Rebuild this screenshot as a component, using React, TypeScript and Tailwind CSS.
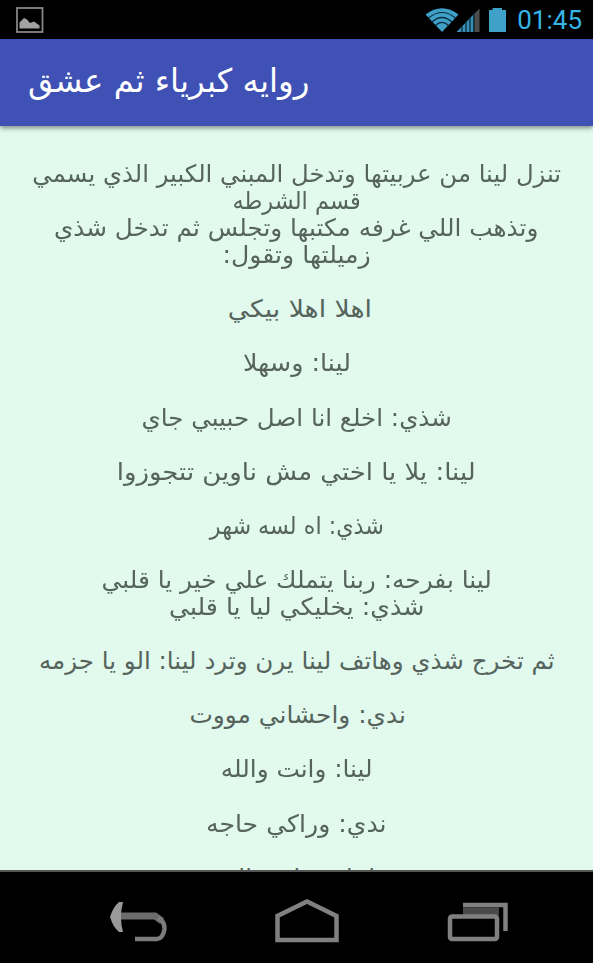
import { FC } from "react";

interface StoryLine {
  text: string;
  className?: string;
}

// 空文字は段落の区切り
const STORY: StoryLine[] = [
  { text: "تنزل لينا من عربيتها وتدخل المبني الكبير الذي يسمي", className: "scale-x-[1.014]" },
  { text: "قسم الشرطه", className: "scale-x-[0.935]" },
  { text: "وتذهب اللي غرفه مكتبها وتجلس ثم تدخل شذي", className: "scale-x-[1.03]" },
  { text: "زميلتها وتقول:", className: "scale-x-[1.05]" },
  { text: "" },
  { text: "اهلا اهلا بيكي", className: "translate-x-[3px] scale-x-[1.11]" },
  { text: "" },
  { text: "لينا: وسهلا", className: "scale-x-[1.06]" },
  { text: "" },
  { text: "شذي: اخلع انا اصل حبيبي جاي", className: "scale-x-[1.023]" },
  { text: "" },
  { text: "لينا: يلا يا اختي مش ناوين تتجوزوا", className: "scale-x-[1.08]" },
  { text: "" },
  { text: "شذي: اه لسه شهر", className: "scale-x-[0.927]" },
  { text: "" },
  { text: "لينا بفرحه: ربنا يتملك علي خير يا قلبي", className: "scale-x-[1.034]" },
  { text: "شذي: يخليكي ليا يا قلبي", className: "scale-x-[1.05]" },
  { text: "" },
  { text: "ثم تخرج شذي وهاتف لينا يرن وترد لينا: الو يا جزمه", className: "translate-x-[0.5px] scale-x-[1.022]" },
  { text: "" },
  { text: "ندي: واحشاني مووت", className: "translate-x-px scale-x-[1.034]" },
  { text: "" },
  { text: "لينا: وانت والله", className: "scale-x-[1.03]" },
  { text: "" },
  { text: "ندي: وراكي حاجه", className: "scale-x-[1.047]" },
  { text: "" },
  { text: "لينا: ثم انتي الي" },
];

const StatusBar: FC = () => (
  <div className="flex h-[39px] shrink-0 items-center justify-between bg-black pl-4 pr-[11px]">
    <svg className="h-[26px] w-[28px]" viewBox="0 0 28 26">
      <rect x="1" y="1" width="25.5" height="24" fill="none" stroke="#858585" strokeWidth="1.8" />
      <path d="M3.500 21.500V15.500L8 11L11 12.500L14 16L18 14.500L23.500 18.500V21.500Z" fill="#a3a3a3" />
    </svg>
    <div className="flex items-center">
      <svg className="h-[26px] w-[82px]" viewBox="0 0 82 26">
        <path d="M0.500 7.500Q17-5 33.500 7.500L17 25Z" fill="#3fa0c8" />
        <g fill="none" stroke="#0b2a38" strokeWidth="1.200">
          <path d="M3.500 11Q17 0 30.500 11" />
          <path d="M7 15Q17 6 27 15" />
          <path d="M10.500 18.500Q17 12 23.500 18.500" />
        </g>
        <path d="M31.500 25L48.500 7.500V25Z" fill="#3690b8" />
        <path d="M49 25V7L54.500 1.500V25Z" fill="#4d4d4d" />
        <path d="M37 18V25M41 14V25M45 10V25M49 6V25" stroke="#0b2a38" strokeWidth="1.300" />
        <path d="M64 3H67.500V1H77V3H81V25H64Z" fill="#3fa0c8" />
      </svg>
      <span className="ml-[10px] font-['Roboto',sans-serif] text-[26px] leading-none text-[#35b5e5]">01:45</span>
    </div>
  </div>
);

const NavigationBar: FC = () => (
  <div className="flex h-[93px] shrink-0 items-center justify-between border-t-2 border-[#555] bg-black pl-[108px] pr-[82px] pt-[8px]">
    <svg className="h-[44px] w-[60px] blur-[0.7px]" viewBox="0 0 60 44" fill="none">
      <path d="M12 16H47L54 21" stroke="#6c6c6c" strokeWidth="7" />
      <path d="M50 18Q57 22 56.500 29Q55 38.500 49 39H27" stroke="#7c7c7c" strokeWidth="4.500" />
      <path d="M2 17Q5 7 11 2H15Q11 17 15 32H11Q5 27 2 17Z" fill="#999" />
    </svg>
    <svg className="h-[46px] w-[68px] blur-[0.7px]" viewBox="0 0 68 46" fill="none" stroke="#808080" strokeWidth="4.500">
      <path d="M3.500 41V17L33 2.500L62.500 17V41Z" />
    </svg>
    <svg className="h-[44px] w-[64px] blur-[0.7px]" viewBox="0 0 64 44" fill="none" stroke="#808080" strokeWidth="4.500">
      <path d="M16 11.500H52" stroke="#4a4a4a" strokeWidth="8" />
      <rect x="3" y="16.500" width="47" height="22.500" rx="2" />
      <path d="M16 5H58.500V31" />
    </svg>
  </div>
);

export default function App() {
  return (
    <div className="flex h-[963px] w-[593px] flex-col overflow-hidden bg-[#e1faed]">
      <StatusBar />
      <header className="z-10 flex h-[87px] shrink-0 items-center bg-[#3f51b5] pb-[3px] pl-7 shadow-[0_2px_5px_rgba(0,0,0,0.45)]">
        <h1 dir="rtl" className="whitespace-nowrap font-['DejaVu_Sans',sans-serif] text-[32.5px] leading-none text-white">
          روايه كبرياء ثم عشق
        </h1>
      </header>
      <main dir="rtl" className="min-h-0 flex-1 overflow-hidden pt-[35px] font-['DejaVu_Sans',sans-serif] text-[24px] leading-[27.070px] text-[#56645d]">
        {STORY.map((line, i) => (
          <p key={i} className="flex h-[27.070px] justify-center whitespace-nowrap">
            <span className={line.className}>{line.text}</span>
          </p>
        ))}
      </main>
      <NavigationBar />
    </div>
  );
}
